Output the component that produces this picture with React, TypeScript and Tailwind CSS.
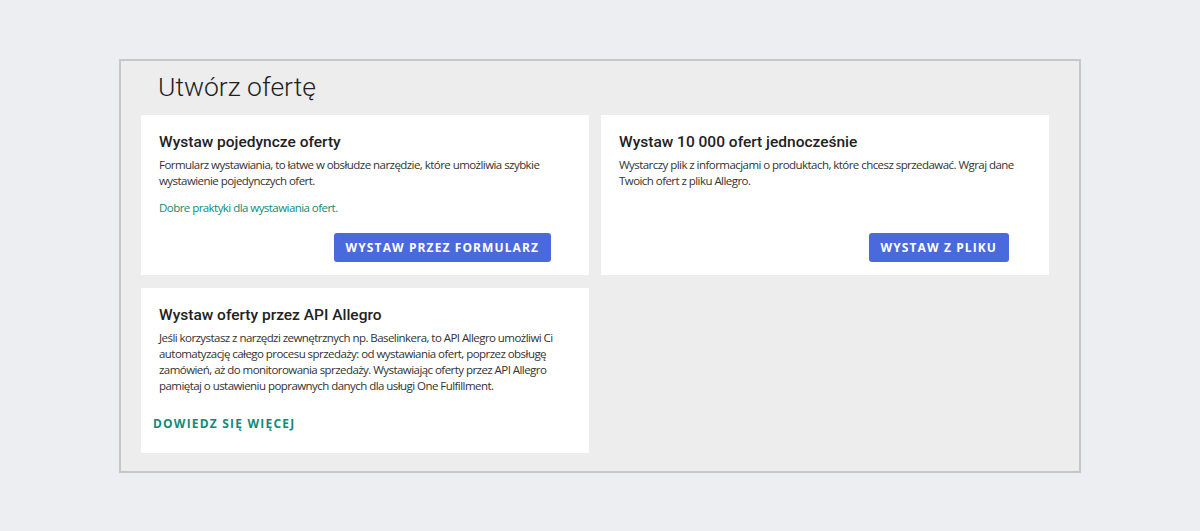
import type { ReactNode } from 'react';

const sans = { fontFamily: '"Open Sans", "Liberation Sans", sans-serif' };
const roboto = { fontFamily: 'Roboto, "Liberation Sans", sans-serif' };

interface OptionCardProps {
  title: string;
  children: ReactNode;
  action: ReactNode;
}

// Single white tile with heading, description and bottom action
function OptionCard({ title, children, action }: OptionCardProps) {
  return (
    <div className="bg-white flex flex-col pt-4 px-[18px] pb-[13px]">
      <h2 className="text-[15.5px] leading-[22px] font-medium text-[#222]" style={roboto}>
        {title}
      </h2>
      <div className="mt-1 text-[11.5px] leading-4 tracking-[-0.55px] text-[#333]" style={sans}>
        {children}
      </div>
      {action}
    </div>
  );
}

function PrimaryButton({ label, wide }: { label: string; wide?: boolean }) {
  return (
    <div className={`mt-auto pt-[17px] flex justify-end ${wide ? 'pr-[22px]' : 'pr-5'}`}>
      <button
        className="h-[29px] px-3 rounded-[3px] bg-[#4a69dc] text-white text-[12px] font-bold tracking-[1.1px] uppercase"
        style={sans}
      >
        {label}
      </button>
    </div>
  );
}

export default function App() {
  return (
    <div className="min-h-[531px] bg-[#eceef1] pt-[59px]">
      <div className="mx-auto w-[962px] border-2 border-[#c7c7c7] bg-[#ededed] pt-2 pb-[18px]">
        <h1
          className="pl-[37px] text-[26.5px] leading-[36px] font-light text-[#1f1f1f] mb-[10px]"
          style={roboto}
        >
          Utwórz ofertę
        </h1>

        <div className="ml-5 w-[908px] grid grid-cols-2 gap-x-3 gap-y-[13px]">
          <OptionCard title="Wystaw pojedyncze oferty" action={<PrimaryButton label="Wystaw przez formularz" />}>
            <p>
              Formularz wystawiania, to łatwe w obsłudze narzędzie, które umożliwia szybkie wystawienie
              pojedynczych ofert.
            </p>
            <a className="block mt-[11px] text-[#138a76]">Dobre praktyki dla wystawiania ofert.</a>
          </OptionCard>

          <OptionCard
            title="Wystaw 10 000 ofert jednocześnie"
            action={<PrimaryButton label="Wystaw z pliku" wide />}
          >
            <p>
              Wystarczy plik z informacjami o produktach, które chcesz sprzedawać. Wgraj dane Twoich ofert z
              pliku Allegro.
            </p>
          </OptionCard>

          <OptionCard
            title="Wystaw oferty przez API Allegro"
            action={
              <div className="mt-[15px] mb-[2px] -ml-[6px]">
                <button
                  className="h-[29px] px-0 text-[#138a76] text-[12px] font-bold tracking-[1.2px] uppercase"
                  style={sans}
                >
                  Dowiedz się więcej
                </button>
              </div>
            }
          >
            <p className="pr-2">
              Jeśli korzystasz z narzędzi zewnętrznych np. Baselinkera, to API Allegro umożliwi Ci
              automatyzację całego procesu sprzedaży: od wystawiania ofert, poprzez obsługę zamówień, aż do
              monitorowania sprzedaży. Wystawiając oferty przez API Allegro pamiętaj o ustawieniu poprawnych
              danych dla usługi One Fulfillment.
            </p>
          </OptionCard>
        </div>
      </div>
    </div>
  );
}
